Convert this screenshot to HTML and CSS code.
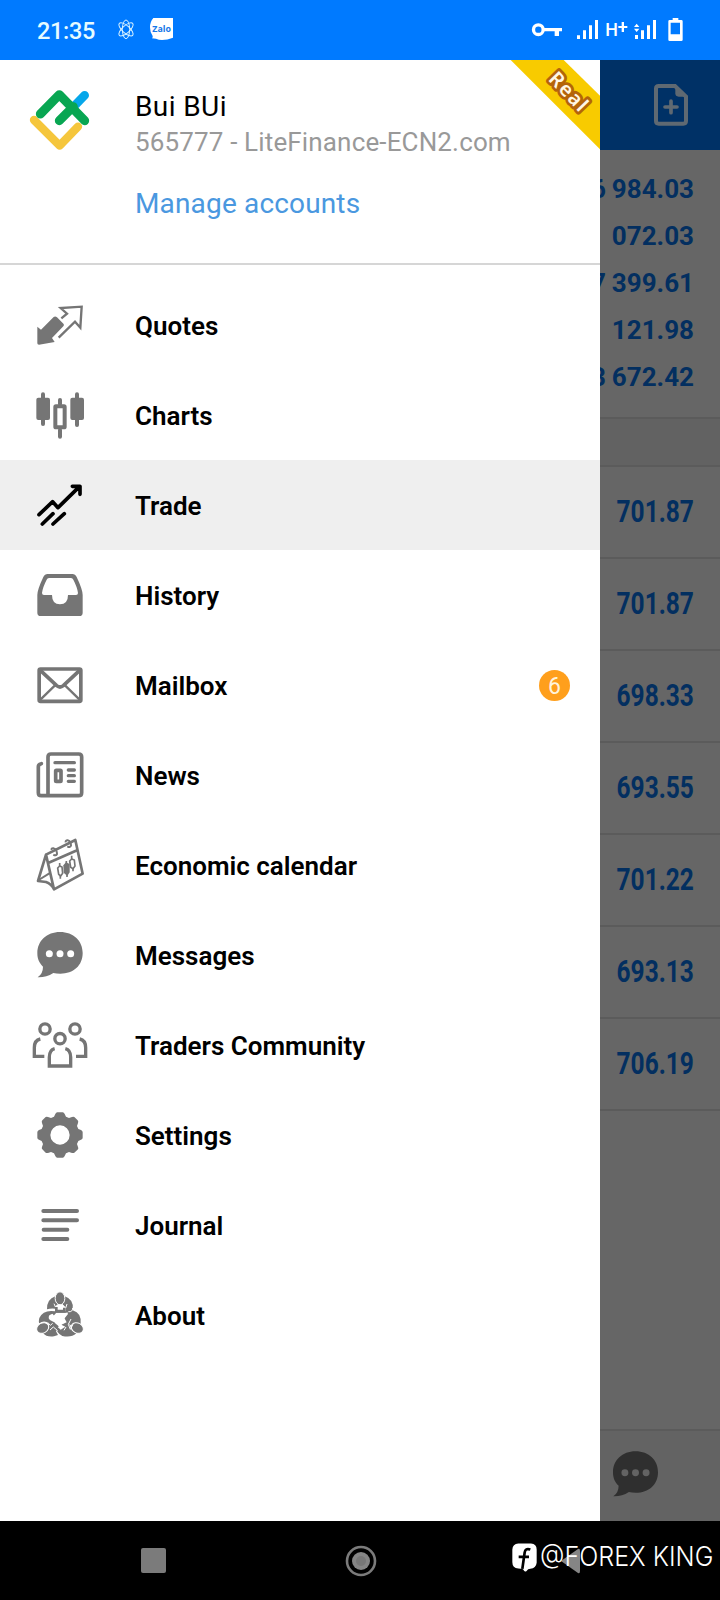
FILE: index.html
```html
<!DOCTYPE html>
<html lang="en">
<head>
<meta charset="utf-8">
<title>Trading menu</title>
<link rel="stylesheet" href="styles.css">
</head>
<body>
<div class="screen">
  <header class="status">
    <span class="clock">21:35</span>
    <svg class="atom" viewBox="351 57 54 63" fill="none" stroke="#d8f2ff" stroke-width="3">
      <ellipse cx="378" cy="88" rx="11" ry="28"/>
      <ellipse cx="378" cy="88" rx="11" ry="27" transform="rotate(48 378 88)"/>
      <ellipse cx="378" cy="88" rx="11" ry="27" transform="rotate(-48 378 88)"/>
    </svg>
    <svg class="zalo" viewBox="450 54 69 66">
      <path d="M460 54H519V113Q502 120 486 120Q476 120 468 116L456 115Q459 112 458 108Q450 98 450 82Q450 65 460 54Z" fill="#fff"/>
      <text x="457" y="96" textLength="56" lengthAdjust="spacingAndGlyphs" class="zalo-text">Zalo</text>
    </svg>
    <svg class="signals" viewBox="510 48 465 84" fill="#fff">
      <circle cx="535" cy="89" r="14.500" fill="none" stroke="#fff" stroke-width="10"/>
      <path d="M552 84H606V94H597V108H584V94H552Z"/>
      <path d="M651 106h9v11h-9zM669 91h9v26h-9zM687 76h9v41h-9zM705 60h9v57h-9z"/>
      <text x="736" y="108" textLength="38" lengthAdjust="spacingAndGlyphs" class="net">H</text>
      <path d="M775 78h10v-12h7v12h10v6h-10v12h-7v-12h-10z"/>
      <path d="M830 71l8 10h-16zM830 96l8-10h-16zM825 105h9v12h-9zM843 91h9v26h-9zM861 76h9v41h-9zM879 60h9v57h-9z"/>
      <path fill-rule="evenodd" d="M938 54H955V60H964Q968 60 968 64V119Q968 123 964 123H929Q925 123 925 119V64Q925 60 929 60H938ZM932 68V103H960V68Z"/>
    </svg>
  </header>

  <main class="stage">
    <nav class="drawer">
      <section class="account">
        <svg class="logo" viewBox="75 255 210 210" fill="none" stroke-linecap="round" stroke-linejoin="round" stroke-width="26">
          <path d="M102 360L179 437L234 380" stroke="#f5c63c" stroke-width="25"/>
          <path d="M254 286L225 316" stroke="#06a7ea"/>
          <path d="M121 342L178 284L254 362M178 362L220 320" stroke="#08a652" stroke-width="27"/>
        </svg>
        <div class="who">
          <div class="name">Bui BUi</div>
          <div class="server">565777 - LiteFinance-ECN2.com</div>
          <a class="manage">Manage accounts</a>
        </div>
        <svg class="ribbon" viewBox="450 180 270 270">
          <path d="M452 180H611L720 287V448Z" fill="#f8cb00"/>
          <text class="real" transform="translate(625 275) rotate(46)" y="20" text-anchor="middle" textLength="138">Real</text>
        </svg>
      </section>

      <ul class="menu">
        <li class="item">
          <svg class="icon" viewBox="90 45 180 180">
            <path fill="#757575" d="M112 140L123 149L161 111Q166 108 171 112L191 132Q193 136 190 139L156 174L164 186L117 194Q112 194 112 190Z"/>
            <path class="line" stroke-width="7" d="M184 115L201 101L182 84L245 80L241 143L225 125L176 173"/>
          </svg><span>Quotes</span></li>
        <li class="item">
          <svg class="icon" viewBox="90 315 180 180">
            <g fill="#757575"><rect x="123" y="337" width="12" height="101" rx="6"/><rect x="109" y="353" width="41" height="67" rx="6"/><rect x="225" y="337" width="12" height="104" rx="6"/><rect x="211" y="353" width="41" height="67" rx="6"/><rect x="174" y="354" width="12" height="24" rx="6"/><rect x="174" y="444" width="12" height="32" rx="6"/></g>
            <rect x="166" y="379" width="28" height="63" rx="2" class="line" stroke-width="12"/>
          </svg><span>Charts</span></li>
        <li class="item active">
          <svg class="icon" viewBox="90 585 180 180" fill="none" stroke="#000" stroke-linecap="round" stroke-linejoin="round" stroke-width="11">
            <path d="M117 704L158 665L174 683L239 619M217 619H240V643M127 732L159 701M159 732L193 701"/>
          </svg><span>Trade</span></li>
        <li class="item">
          <svg class="icon" viewBox="90 45 180 180">
            <path fill="#757575" fill-rule="evenodd" d="M143 72H217Q226 72 230 81Q248 119 248 135V188Q248 198 238 198H122Q112 198 112 188V135Q112 119 130 81Q134 72 143 72ZM147 84Q142 84 140 89Q128 112 126 129Q126 135 132 135H156Q156 163 180 163Q204 163 204 135H228Q234 135 234 129Q232 112 220 89Q218 84 213 84Z"/>
          </svg><span>History</span></li>
        <li class="item">
          <svg class="icon" viewBox="90 315 180 180">
            <rect x="117.500" y="357" width="125" height="97" rx="4" class="line" stroke-width="11"/>
            <path class="line" stroke-width="11" d="M121 361L170 407Q180 415 190 407L239 361"/>
            <path class="line" stroke-width="7" d="M122 448L165 406M238 448L195 406"/>
          </svg><span>Mailbox</span><b class="badge">6</b></li>
        <li class="item">
          <svg class="icon" viewBox="90 585 180 180">
            <path class="line" stroke-width="11" stroke-linecap="round" d="M144 737V621Q144 612 153 612H236Q245 612 245 621V728Q245 737 236 737H124Q115 737 115 728V650Q115 643 124 641"/>
            <path class="line" stroke-width="10" stroke-linecap="round" d="M165 638H223M205 660H223M205 677H223M205 694H223"/>
            <rect x="167" y="661" width="16" height="33" class="line" stroke-width="11" rx="2"/>
          </svg><span>News</span></li>
        <li class="item">
          <svg class="icon" viewBox="90 45 180 180">
            <g class="line" stroke-width="8" stroke-linejoin="round">
              <path d="M138 104L226 60L248 161L162 208L138 104L114 183L138 186Q154 192 162 207M146 128L233 90" stroke-width="8"/>
              <path d="M116 180L148 160" stroke-width="6"/>
              <path d="M155 90Q153 84 161 85Q171 88 171 102Q168 109 160 104M197 67Q196 60 204 61Q213 64 213 77Q210 84 202 79" stroke-width="6"/>
              <path d="M179 129V138M181 167V176M215 107V117M219 145V154M199 123V132M201 160V171" stroke-width="5"/>
              <path d="M179 138L173 144L176 163L182 168L188 160L186 141ZM215 117L209 123L212 142L219 146L225 138L223 120Z" stroke-width="5"/>
            </g>
            <path fill="#757575" d="M198 127L209 132V157L202 168L191 158L190 136Z"/>
          </svg><span>Economic calendar</span></li>
        <li class="item">
          <svg class="icon" viewBox="90 315 180 180">
            <path fill="#757575" d="M180 336C221 336 248 363 248 399C248 437 220 461 181 461Q169 461 160 459Q138 473 113 472Q129 461 129 440C118 429 112 417 112 399C112 363 140 336 180 336Z"/>
            <g fill="#fff"><circle cx="148" cy="401" r="10.500"/><circle cx="180" cy="401" r="10.500"/><circle cx="212" cy="401" r="10.500"/></g>
          </svg><span>Messages</span></li>
        <li class="item">
          <svg class="icon" viewBox="90 585 180 180">
            <g class="line" stroke-width="10"><circle cx="135" cy="627" r="15.500"/><circle cx="225" cy="627" r="15.500"/><circle cx="180" cy="656" r="15.500"/>
            <path d="M121 657Q103 661 103 683V709H133M239 657Q257 661 257 683V709H228M164 686Q148 690 148 712V738H212V712Q212 690 196 686"/></g>
          </svg><span>Traders Community</span></li>
        <li class="item">
          <svg class="icon" viewBox="90 45 180 180">
            <path fill="#757575" fill-rule="evenodd" d="M172 67H188Q192 67 194 72L198 80L207 84L216 81Q220 79 223 81L233 91Q236 94 234 99L231 108L235 117L243 120Q248 122 248 127V143Q248 147 243 149L235 153L231 162L234 171Q236 175 234 178L223 188Q220 190 216 189L207 186L198 190L194 198Q192 203 188 203H172Q168 203 166 198L162 190L153 186L144 189Q140 190 137 188L127 178Q124 175 126 171L129 162L125 153L117 149Q112 147 112 143V127Q112 122 117 120L125 117L129 108L126 99Q124 94 127 91L137 81Q140 79 144 81L153 84L162 80L166 72Q168 67 172 67ZM180 106A29 29 0 1 0 180 164A29 29 0 1 0 180 106Z"/>
          </svg><span>Settings</span></li>
        <li class="item">
          <svg class="icon" viewBox="90 315 180 180">
            <path class="line" stroke-width="12" stroke-linecap="round" d="M130 363H231M130 391H231M131 419H202M130 447H202"/>
          </svg><span>Journal</span></li>
        <li class="item">
          <svg class="icon" viewBox="90 585 180 180">
            <g fill="#757575">
              <path d="M166 619Q140 628 141 658Q152 654 166 656V649L175 641H185L197 652V664H166Q130 658 118 684Q115 697 118 700Q128 692 140 696L148 704L143 721L129 729Q139 742 162 739L174 735L168 724L176 709L163 697L151 691Q143 686 148 676L158 671L160 678L169 668H200L193 684L200 697L184 704L196 710L182 719Q176 711 169 711Q168 728 187 738Q214 744 229 730L216 722L207 701L215 708Q222 697 242 703Q246 669 218 661Q224 629 194 619Z"/>
              <ellipse cx="180" cy="625" rx="14.500" ry="19.500" stroke="#fff" stroke-width="3"/>
              <ellipse cx="128" cy="714" rx="19" ry="15" transform="rotate(-30 128 714)" stroke="#fff" stroke-width="3"/>
              <ellipse cx="232" cy="714" rx="19" ry="15" transform="rotate(30 232 714)" stroke="#fff" stroke-width="3"/>
            </g>
            <g fill="none" stroke="#fff" stroke-width="3" stroke-linejoin="round">
              <path d="M162 641L168 655L177 643L180 653L187 643L196 657L201 642M205 665Q218 667 218 654"/>
              <path d="M143 697L151 706L158 700M150 720L160 711L173 722M213 687L205 703L211 718L219 703M198 711L192 721"/>
            </g>
            <path fill="#fff" d="M150 675L159 673L164 681L172 671L195 671L202 667L204 672L192 687V699L181 705L168 702L162 691L153 688Z"/>
            <path fill="#757575" d="M165 651H173V659H189V653H197V668H165Z"/>
          </svg><span>About</span></li>
      </ul>
    </nav>

    <aside class="pane">
      <div class="pane-head">
        <svg class="newdoc" viewBox="879 249 108 132">
          <path d="M893 258H945L978 290V363Q978 371 970 371H896Q888 371 888 363V266Q888 258 896 258Z" fill="none" stroke="#5f6972" stroke-width="12"/>
          <path d="M946 255L982 290H956Q946 290 946 280Z" fill="#5f6972"/>
          <path d="M933 303V338M915 321H951" stroke="#5f6972" stroke-width="11" stroke-linecap="round"/>
        </svg>
      </div>
      <div class="summary">
        <div><i>6</i>984.03</div>
        <div>072.03</div>
        <div><i>7</i>399.61</div>
        <div>121.98</div>
        <div><i>3</i>672.42</div>
      </div>
      <div class="section"></div>
      <div class="rows">
        <div><span>701.87</span></div>
        <div><span>701.87</span></div>
        <div><span>698.33</span></div>
        <div><span>693.55</span></div>
        <div><span>701.22</span></div>
        <div><span>693.13</span></div>
        <div><span>706.19</span></div>
      </div>
      <div class="tabs">
        <svg class="bubble" viewBox="112 336 136 137">
          <path fill="#2f2f2f" d="M180 336C221 336 248 363 248 399C248 437 220 461 181 461Q169 461 160 459Q138 473 113 472Q129 461 129 440C118 429 112 417 112 399C112 363 140 336 180 336Z"/>
          <g fill="#636363"><circle cx="148" cy="401" r="10.500"/><circle cx="180" cy="401" r="10.500"/><circle cx="212" cy="401" r="10.500"/></g>
        </svg>
      </div>
    </aside>
  </main>

  <footer class="sysnav">
    <i class="recent"></i>
    <svg class="home" viewBox="0 0 32 32"><circle cx="16" cy="16" r="14" fill="none" stroke="#7b7b7b" stroke-width="2.600"/><circle cx="16" cy="16" r="9" fill="#858585"/><circle cx="16" cy="16" r="5" fill="#777"/></svg>
    <svg class="back" viewBox="0 0 19 26"><path d="M0 13L17 1Q19 0 19 3V23Q19 26 17 25Z" fill="#858585"/></svg>
    <div class="watermark">
      <svg class="fb" viewBox="37 431 75 86">
        <path d="M56 432H94Q111 434 111 450V490Q109 507 92 508Q85 508 80 515Q76 518 73 514Q72 507 56 507Q38 505 38 488V450Q39 434 56 432Z" fill="#fff"/>
        <path d="M92 450Q77 445 75 459L68 508M57 472H88" fill="none" stroke="#000" stroke-width="8"/>
      </svg>
      <span>@FOREX KING</span>
    </div>
  </footer>
</div>
</body>
</html>
```

FILE: styles.css
```css
* { box-sizing: border-box; }
body { margin: 0; font-family: Roboto, "Liberation Sans", sans-serif; background: #fff; }
svg { display: block; flex: none; }
.screen { width: 720px; height: 1600px; display: flex; flex-direction: column; overflow: hidden; }

.status { height: 60px; flex: none; background: #007aff; display: flex; align-items: flex-start; color: #e6fbff; }
.clock { width: 80px; margin: 16px 0 0 37px; font-size: 23.5px; line-height: 30px; font-weight: 500; letter-spacing: -.3px; }
.atom { width: 18px; height: 21px; margin-top: 19px; }
.zalo { width: 23px; height: 22px; margin: 18px 0 0 15px; }
.zalo-text { font: 700 26px "Open Sans", sans-serif; fill: #1677e8; }
.signals { width: 155px; height: 28px; margin: 16px 35px 0 auto; }
.net { font: 500 56px Roboto, sans-serif; }

.stage { height: 1461px; flex: none; display: flex; }
.drawer { width: 600px; flex: none; background: #fff; }
.account { position: relative; height: 205px; border-bottom: 2px solid #d6d6d6; display: flex; }
.logo { width: 70px; height: 70px; margin: 25px 40px 0 25px; }
.who { padding-top: 29px; white-space: nowrap; }
.name { font-size: 28px; line-height: 36px; letter-spacing: .4px; color: #000; }
.server { font-size: 26px; line-height: 34px; letter-spacing: .15px; color: #999; }
.manage { display: block; margin-top: 27px; font-size: 28px; line-height: 36px; letter-spacing: .16px; color: #4a98e0; }
.ribbon { position: absolute; top: 0; right: 0; width: 90px; height: 90px; }
.real { font: 600 60px "Noto Sans", sans-serif; fill: #fff7e6; stroke: #b4640a; stroke-width: 17px; stroke-linejoin: round; paint-order: stroke; }

.menu { list-style: none; margin: 0; padding: 15px 0 0; }
.item { height: 90px; padding: 0 30px; display: flex; align-items: center; font-size: 26px; font-weight: 600; color: #000; }
.item span { margin-left: 45px; padding-top: 2px; white-space: nowrap; }
.active { background: #efefef; }
.icon { width: 60px; height: 60px; }
.line { fill: none; stroke: #757575; }
.badge { width: 31px; height: 31px; margin-left: auto; border-radius: 50%; background: #ff9f1c; color: #fff4dc; font: 400 23px/33px Roboto, sans-serif; text-align: center; }

.pane { width: 120px; flex: none; background: #666; color: #032f60; display: flex; flex-direction: column; overflow: hidden; }
.pane-head { height: 90px; background: #003166; padding: 23px 0 0 53px; }
.newdoc { width: 36px; height: 44px; }
.summary { height: 269px; padding: 16px 26px 0 0; border-bottom: 2px solid #5b5b5b; }
.summary div { height: 47px; line-height: 47px; display: flex; justify-content: flex-end; font-size: 26px; font-weight: 700; }
.summary i { font-style: normal; margin-right: 6px; }
.section { height: 48px; background: #626262; border-bottom: 2px solid #5b5b5b; }
.rows div { height: 92px; border-bottom: 2px solid #5b5b5b; padding: 0 26px 1px 0; display: flex; justify-content: flex-end; align-items: center; }
.rows span { font-size: 31px; font-weight: 700; transform: scaleX(.79); transform-origin: right; }
.tabs { height: 92px; margin-top: auto; border-top: 2px solid #5b5b5b; background: #636363; padding: 20px 0 0 13px; }
.bubble { width: 45px; height: 46px; }

.sysnav { position: relative; height: 79px; background: #000; display: flex; align-items: center; }
.recent { width: 25px; height: 25px; margin-left: 141px; border-radius: 2px; background: #7b7b7b; }
.home { width: 32px; height: 32px; margin-left: 179px; }
.back { width: 19px; height: 26px; margin-left: 184px; }
.watermark { position: absolute; left: 512px; top: 18px; display: flex; align-items: center; color: #fff; font: 300 27px/36px Inter, sans-serif; white-space: nowrap; }
.watermark span { transform: scaleX(.93); transform-origin: left; }
.fb { width: 25px; height: 29px; margin-right: 3px; }
```
